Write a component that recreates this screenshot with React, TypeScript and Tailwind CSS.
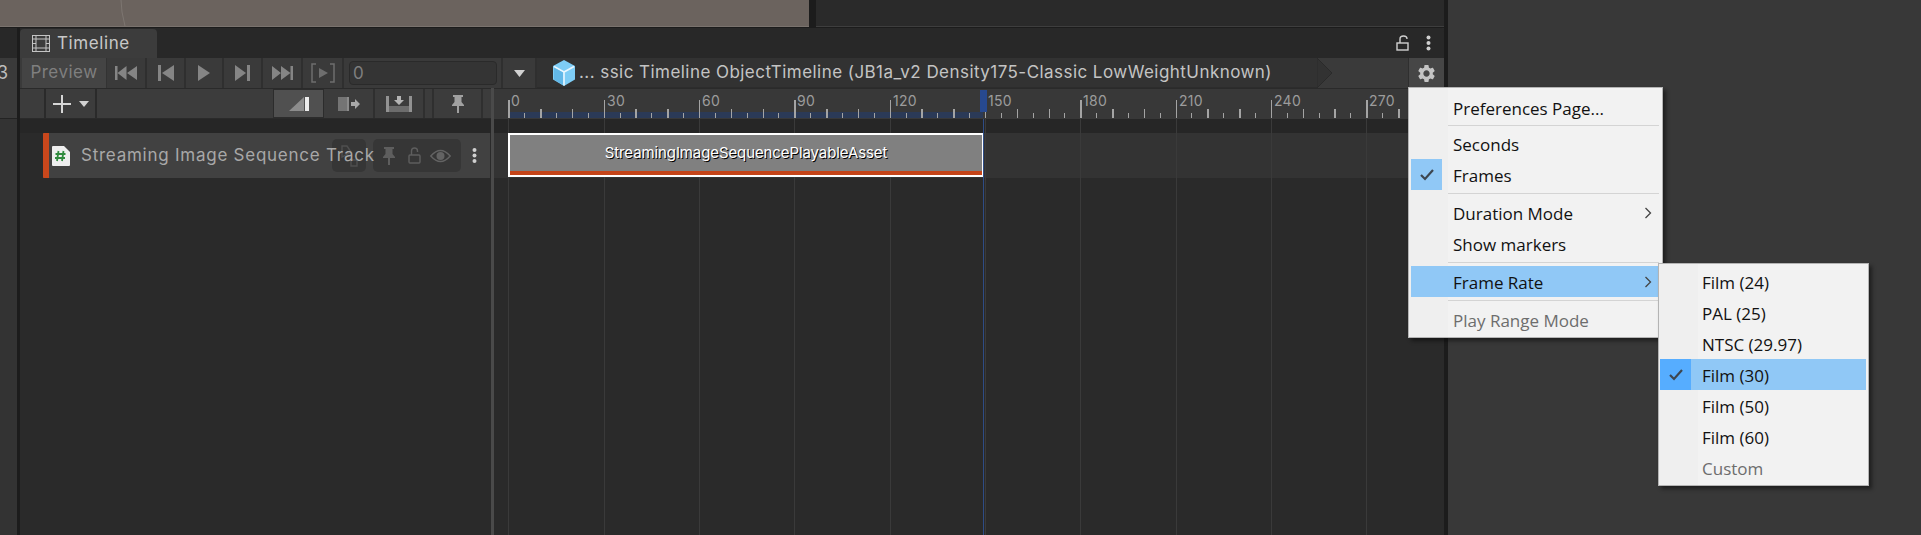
import React from "react";
import { MdSettings } from "react-icons/md";

const pxPerFrame = 95.33 / 30;
const originX = 14.3; // frame 0, measured from the left of the timeline area
const frameTicks = Array.from({ length: 58 }, (_, i) => i * 5);
const labelFrames = [0, 30, 60, 90, 120, 150, 180, 210, 240, 270];

const ToolButton = ({ w, children }: { w: string; children?: React.ReactNode }) => (
  <div className={`${w} h-full flex items-center justify-center border-r-2 border-[#2f2f2f]`}>{children}</div>
);

const Separator = ({ className }: { className: string }) => (
  <div className={`${className} ml-[37px] flex flex-col justify-center`}>
    <div className="h-[1px] bg-[#d4d4d4] mr-[1px]" />
  </div>
);

const MenuItem = ({
  label,
  highlight,
  checked,
  checkColor,
  arrow,
  disabled,
}: {
  label: string;
  highlight?: string;
  checked?: boolean;
  checkColor?: string;
  arrow?: boolean;
  disabled?: boolean;
}) => (
  <div className={`h-[31px] flex items-center relative ${highlight || ""}`}>
    <div className={`w-[31px] h-[31px] flex items-center justify-center ${checkColor || ""}`}>
      {checked && (
        <svg width="16" height="13" viewBox="0 0 16 13">
          <path d="M2 7 L6 11 L14 2" fill="none" stroke="#3d4650" strokeWidth="2.2" />
        </svg>
      )}
    </div>
    <span className={`ml-[11px] pt-[2px] text-[17px] leading-none ${disabled ? "text-[#6d6d6d]" : "text-[#111111]"}`}>{label}</span>
    {arrow && (
      <svg className="absolute right-[8px] top-[10px]" width="8" height="12" viewBox="0 0 8 12">
        <path d="M1.5 1 L6.5 6 L1.5 11" fill="none" stroke="#444444" strokeWidth="1.3" />
      </svg>
    )}
  </div>
);

const Pin = ({ color = "#8a8a8a" }: { color?: string }) => (
  <svg width="14" height="18" viewBox="0 0 14 18" fill={color}>
    <path d="M2 0 H12 V2 H10.5 V7 L13 10 V11 H8 V18 H6 V11 H1 V10 L3.5 7 V2 H2 Z" />
  </svg>
);

export default function App() {
  return (
    <div className="w-[1921px] h-[535px] overflow-hidden flex bg-[#383838] font-['Inter',sans-serif] relative">
      <div className="w-[1448px] h-full flex flex-col bg-[#1c1c1c]">
        {/* scene view left over above the timeline */}
        <div className="h-[28px] flex shrink-0">
          <div className="w-[809px] h-[27px] bg-[#6b635e] border-b border-[#7a736e] relative">
            <svg className="absolute left-[120px] top-0" width="8" height="26">
              <path d="M1 0 L2 12 L5 26" stroke="#7d7671" fill="none" />
            </svg>
          </div>
          <div className="flex-1 ml-[7px] mr-[4px] h-[27px] bg-[#2a2a2a] border-b border-[#3e3e3e]" />
        </div>

        <div className="flex-1 flex min-h-0">
          {/* neighbouring panel */}
          <div className="w-[17px] flex flex-col bg-[#333333]">
            <div className="h-[30px] bg-[#282828]" />
            <div className="h-[30px] bg-[#3a3a3a] text-[18px] text-[#bdbdbd] leading-[30px] -indent-[3px] overflow-hidden">3</div>
            <div className="h-[31px] bg-[#3a3a3a] border-b border-[#232323]" />
          </div>

          <div className="w-[1424px] ml-[3px] flex flex-col bg-[#2a2a2a]">
            {/* tab bar */}
            <div className="h-[30px] flex items-end bg-[#282828] rounded-tr-[4px] shrink-0">
              <div className="w-[137px] h-[29px] bg-[#3c3c3c] rounded-t-[4px] flex items-center pl-[12px] gap-[7px]">
                <svg width="18" height="17" viewBox="0 0 18 17" fill="none" stroke="#c4c4c4">
                  <rect x="0.5" y="0.5" width="17" height="16" />
                  <path d="M4 0.5 V16.5 M14 0.5 V16.5 M4 4 H14 M4 13 H14 M0.5 4 H4 M0.5 8.5 H4 M0.5 13 H4 M14 4 H17.5 M14 8.5 H17.5 M14 13 H17.5" />
                </svg>
                <span className="text-[17px] text-[#c8c8c8] tracking-[0.6px] leading-none">Timeline</span>
              </div>
              <div className="flex-1 h-full flex items-center justify-end gap-[17px] pr-[13px]">
                <svg width="13" height="16" viewBox="0 0 13 16" fill="none" stroke="#d0d0d0" strokeWidth="1.4">
                  <rect x="1" y="8" width="11" height="7" />
                  <path d="M4 8 V4 Q4 1 7.5 1 Q11 1 11 4" />
                </svg>
                <svg width="5" height="16" viewBox="0 0 5 16" fill="#d0d0d0">
                  <circle cx="2.5" cy="2.5" r="2" />
                  <circle cx="2.5" cy="8" r="2" />
                  <circle cx="2.5" cy="13.5" r="2" />
                </svg>
              </div>
            </div>

            {/* play controls + breadcrumb */}
            <div className="h-[30px] flex bg-[#3a3a3a] shrink-0 pl-[2px]">
              <div className="w-[85px] h-full bg-[#444444] border-r border-[#333333] flex items-center justify-center text-[17px] text-[#7f7f7f] tracking-[0.5px]">
                Preview
              </div>
              <ToolButton w="w-[40px]">
                <svg width="22" height="14" viewBox="0 0 22 14" fill="#858585">
                  <path d="M0 0 H2.5 V14 H0 Z M11.5 0 V14 L2.5 7 Z M22 0 V14 L12 7 Z" />
                </svg>
              </ToolButton>
              <ToolButton w="w-[39px]">
                <svg width="16" height="16" viewBox="0 0 16 16" fill="#858585">
                  <path d="M0 0 H3 V16 H0 Z M16 0 V16 L4 8 Z" />
                </svg>
              </ToolButton>
              <ToolButton w="w-[38px]">
                <svg width="12" height="16" viewBox="0 0 12 16" fill="#858585">
                  <path d="M0 0 L12 8 L0 16 Z" />
                </svg>
              </ToolButton>
              <ToolButton w="w-[39px]">
                <svg width="15" height="16" viewBox="0 0 15 16" fill="#858585">
                  <path d="M0 0 L11 8 L0 16 Z M12 0 H15 V16 H12 Z" />
                </svg>
              </ToolButton>
              <ToolButton w="w-[40px]">
                <svg width="21" height="14" viewBox="0 0 21 14" fill="#858585">
                  <path d="M0 0 L9 7 L0 14 Z M9 0 L18.5 7 L9 14 Z M18.5 0 H21 V14 H18.5 Z" />
                </svg>
              </ToolButton>
              <ToolButton w="w-[41px]">
                <svg width="24" height="20" viewBox="0 0 24 20" fill="none" stroke="#6e6e6e" strokeWidth="1.5">
                  <path d="M5 1 H1 V19 H5 M19 1 H23 V19 H19" />
                  <path d="M8 5 L17 10 L8 15 Z" fill="#6e6e6e" stroke="none" />
                </svg>
              </ToolButton>
              <div className="w-[159px] h-full border-r-2 border-[#2f2f2f] flex items-center pl-[5px] pr-[4px]">
                <div className="w-[150px] h-[24px] rounded-[4px] bg-[#343434] border border-[#2a2a2a] text-[17px] text-[#7f7f7f] leading-[22px] pl-[3px]">0</div>
              </div>
              <div className="w-[34px] h-full border-r-2 border-[#2f2f2f] flex items-center justify-center">
                <svg width="11" height="7" viewBox="0 0 11 7" fill="#d2d2d2">
                  <path d="M0 0 H11 L5.5 7 Z" />
                </svg>
              </div>
              <div className="flex-1 h-full flex">
                <div className="h-full w-[780px] bg-[#323232] flex items-center pl-[16px] border-b border-[#2c2c2c]">
                  <svg width="22" height="26" viewBox="0 0 22 26" className="shrink-0">
                    <path d="M11 0 L22 6 V19.5 L11 26 L0 19.5 V6 Z" fill="#7ecdf6" />
                    <path d="M1 6.5 L11 12 L21 6.5 M11 12 V25.5" stroke="#e9f7ff" strokeWidth="1.6" fill="none" />
                    <path d="M1 7.5 L10 12.5 V25 L1 19.5 Z" fill="#62b8e8" />
                  </svg>
                  <span className="ml-[4px] text-[17px] text-[#c4c4c4] tracking-[0.45px] whitespace-nowrap">... ssic Timeline ObjectTimeline (JB1a_v2 Density175-Classic LowWeightUnknown)</span>
                </div>
                <svg width="16" height="30" viewBox="0 0 16 30" className="shrink-0">
                  <path d="M0 0 L15 15 L0 30 Z" fill="#323232" stroke="#2a2a2a" />
                </svg>
              </div>
              <div className="ml-[2px] w-[36px] h-full bg-[#464646] border-l border-[#2f2f2f] flex items-center justify-center">
                <MdSettings size={21} color="#c4c4c4" />
              </div>
            </div>

            <div className="flex-1 flex min-h-0">
              {/* track list */}
              <div className="w-[471px] flex flex-col">
                <div className="h-[31px] bg-[#3c3c3c] border-y border-[#2a2a2a] flex items-center pl-[24px] shrink-0">
                  <div className="w-[53px] h-full border-x-2 border-[#2a2a2a] flex items-center pl-[7px] gap-[8px]">
                    <svg width="18" height="18" viewBox="0 0 18 18" stroke="#d6d6d6" strokeWidth="2">
                      <path d="M9 0 V18 M0 9 H18" />
                    </svg>
                    <svg width="10" height="6" viewBox="0 0 10 6" fill="#d2d2d2">
                      <path d="M0 0 H10 L5 6 Z" />
                    </svg>
                  </div>
                  <div className="ml-[176px] w-[51px] h-full bg-[#505050] border border-[#2c2c2c] flex items-center justify-center gap-[1px]">
                    <svg width="20" height="14" viewBox="0 0 20 14">
                      <path d="M0 14 L15 0 V14 Z" fill="#8c8c8c" />
                      <rect x="16" y="0" width="4" height="14" fill="#ececec" />
                    </svg>
                  </div>
                  <ToolButton w="w-[51px]">
                    <svg width="22" height="14" viewBox="0 0 22 14">
                      <rect x="0" y="0" width="9" height="14" fill="#747474" />
                      <rect x="9" y="0" width="2" height="14" fill="#8c8c8c" />
                      <path d="M13 5 H17 V2 L22 7 L17 12 V9 H13 Z" fill="#a8a8a8" />
                    </svg>
                  </ToolButton>
                  <ToolButton w="w-[50px]">
                    <svg width="26" height="16" viewBox="0 0 26 16">
                      <rect x="0" y="0" width="3" height="16" fill="#929292" />
                      <rect x="23" y="0" width="3" height="16" fill="#929292" />
                      <rect x="3" y="10" width="20" height="6" fill="#6c6c6c" />
                      <path d="M11 0 H15 V4 H18 L13 9 L8 4 H11 Z" fill="#b4b4b4" />
                    </svg>
                  </ToolButton>
                  <div className="w-[9px] h-full border-r-2 border-[#2f2f2f]" />
                  <ToolButton w="w-[49px]">
                    <Pin color="#a0a0a0" />
                  </ToolButton>
                </div>
                <div className="h-[14px] bg-[#262626] shrink-0" />
                <div className="h-[45px] ml-[23px] mr-[1px] bg-[#414141] flex items-center relative shrink-0">
                  <div className="w-[6px] h-full bg-[#c8471c] rounded-l-[1px]" />
                  <svg width="18" height="20" viewBox="0 0 18 20" className="ml-[3px] shrink-0">
                    <path d="M1 0 H12 L18 6 V19 Q18 20 17 20 H1 Q0 20 0 19 V1 Q0 0 1 0 Z" fill="#eeeeee" />
                    <path d="M6.5 5 L5 15 M11.5 5 L10 15 M3.5 8 H13.5 M3 12 H13" stroke="#2f8a3d" strokeWidth="1.8" fill="none" />
                  </svg>
                  <span className="relative z-10 ml-[11px] text-[17px] text-[#a8a8a8] tracking-[0.75px] whitespace-nowrap">Streaming Image Sequence Track</span>
                  {/* track buttons sit under the long name */}
                  <div className="absolute left-[289px] top-[6px] w-[34px] h-[33px] rounded-[5px] bg-[#363636] flex items-center justify-center">
                    <svg width="20" height="24" viewBox="0 0 20 24" fill="none" stroke="#4f4f4f" strokeWidth="1.4">
                      <path d="M3 2 H8 L12 8 L3 13 Z M12 16 H18 V22 H12 Z" />
                    </svg>
                  </div>
                  <div className="absolute left-[330px] top-[6px] w-[88px] h-[33px] rounded-[5px] bg-[#363636] flex items-center pl-[9px]">
                    <Pin color="#5e5e5e" />
                    <svg width="13" height="17" viewBox="0 0 13 17" fill="none" stroke="#5e5e5e" strokeWidth="1.4" className="ml-[12px]">
                      <rect x="1" y="8" width="11" height="8" rx="1" />
                      <path d="M3.5 8 V4 Q3.5 1 6.5 1 Q9.5 1 9.5 4 V5" />
                    </svg>
                    <svg width="21" height="14" viewBox="0 0 21 14" className="ml-[9px]">
                      <path d="M0.8 7 Q10.5 -4 20.2 7 Q10.5 18 0.8 7 Z" fill="none" stroke="#636363" strokeWidth="1.4" />
                      <circle cx="10.5" cy="7" r="4" fill="#636363" />
                    </svg>
                  </div>
                  <svg width="5" height="15" viewBox="0 0 5 15" fill="#d0d0d0" className="absolute left-[429px] top-[15px]">
                    <circle cx="2.5" cy="2" r="2" />
                    <circle cx="2.5" cy="7.5" r="2" />
                    <circle cx="2.5" cy="13" r="2" />
                  </svg>
                </div>
              </div>

              {/* splitter */}
              <div className="w-[3px] bg-[#4a4a4a] shrink-0" />

              {/* time area: ruler, grid and clips sit at their frame positions */}
              <div className="flex-1 relative overflow-hidden">
                <div className="h-[31px] bg-[#383838] border-t border-[#2a2a2a]" />
                <div className="h-[14px] bg-[#262626]" />
                <div className="h-[45px] bg-[#333333]" />

                <div className="absolute left-[14px] top-[24px] w-[475px] h-[6px] bg-[#2b3a57]" />

                {labelFrames.map((f) => (
                  <div key={f} className="absolute top-[31px] bottom-0 w-[1px] bg-[#3a3a3a]" style={{ left: Math.round(originX + f * pxPerFrame) }} />
                ))}

                {frameTicks.map((f) => {
                  const x = originX + f * pxPerFrame;
                  const left = Math.round(x);
                  const width = Math.round(x + 1.5) - left;
                  const h = f % 30 === 0 ? 18 : f % 10 === 0 ? 9 : 5;
                  return (
                    <div key={f} className="absolute bg-[#a4a4a4]" style={{ left, width: f % 10 === 0 ? width : 1, height: h, top: 30 - h }} />
                  );
                })}

                {labelFrames.map((f) => (
                  <span key={f} className="absolute top-[5px] text-[14px] leading-[16px] text-[#9c9c9c] tracking-[0.3px]" style={{ left: Math.round(originX + f * pxPerFrame) + 3 }}>
                    {f}
                  </span>
                ))}

                <div className="absolute left-[14px] top-[45px] w-[476px] h-[44px] border-2 border-white bg-[#808080] flex items-center justify-center">
                  <span className="text-[15px] text-white tracking-[-0.1px] [text-shadow:1px_1px_0_#000] -mt-[3px]">StreamingImageSequencePlayableAsset</span>
                  <div className="absolute left-0 right-0 bottom-[0px] h-[4px] bg-[#c5451a]" />
                </div>

                <div className="absolute left-[489px] top-[31px] bottom-0 w-[1px] bg-[#2e4c86]" />
                <div className="absolute left-[486px] top-[2px] w-[7px] h-[22px] bg-[#27498f]" />
              </div>
            </div>
          </div>
        </div>
      </div>

      {/* main menu */}
      <div className="absolute left-[1408px] top-[87px] w-[255px] h-[251px] border border-[#b4b4b4] bg-[linear-gradient(to_right,#efefef_39px,#f2f2f2_39px)] shadow-[3px_3px_4px_rgba(0,0,0,0.45)] pt-[4px] pl-[2px] pr-[2px] font-['Open_Sans',sans-serif] z-20">
        <MenuItem label="Preferences Page..." />
        <Separator className="h-[5px]" />
        <MenuItem label="Seconds" />
        <MenuItem label="Frames" checked checkColor="bg-[#90c8f6]" />
        <Separator className="h-[7px]" />
        <MenuItem label="Duration Mode" arrow />
        <MenuItem label="Show markers" />
        <Separator className="h-[7px]" />
        <MenuItem label="Frame Rate" arrow highlight="bg-[#90c8f6]" />
        <Separator className="h-[7px]" />
        <MenuItem label="Play Range Mode" disabled />
      </div>

      {/* frame rate submenu */}
      <div className="absolute left-[1658px] top-[263px] w-[211px] h-[223px] border border-[#b4b4b4] bg-[linear-gradient(to_right,#efefef_39px,#f2f2f2_39px)] shadow-[3px_3px_4px_rgba(0,0,0,0.45)] pt-[2px] pl-[1px] pr-[2px] font-['Open_Sans',sans-serif] z-30">
        <MenuItem label="Film (24)" />
        <MenuItem label="PAL (25)" />
        <MenuItem label="NTSC (29.97)" />
        <MenuItem label="Film (30)" checked checkColor="bg-[#56adff]" highlight="bg-[#90c8f6]" />
        <MenuItem label="Film (50)" />
        <MenuItem label="Film (60)" />
        <MenuItem label="Custom" disabled />
      </div>
    </div>
  );
}
